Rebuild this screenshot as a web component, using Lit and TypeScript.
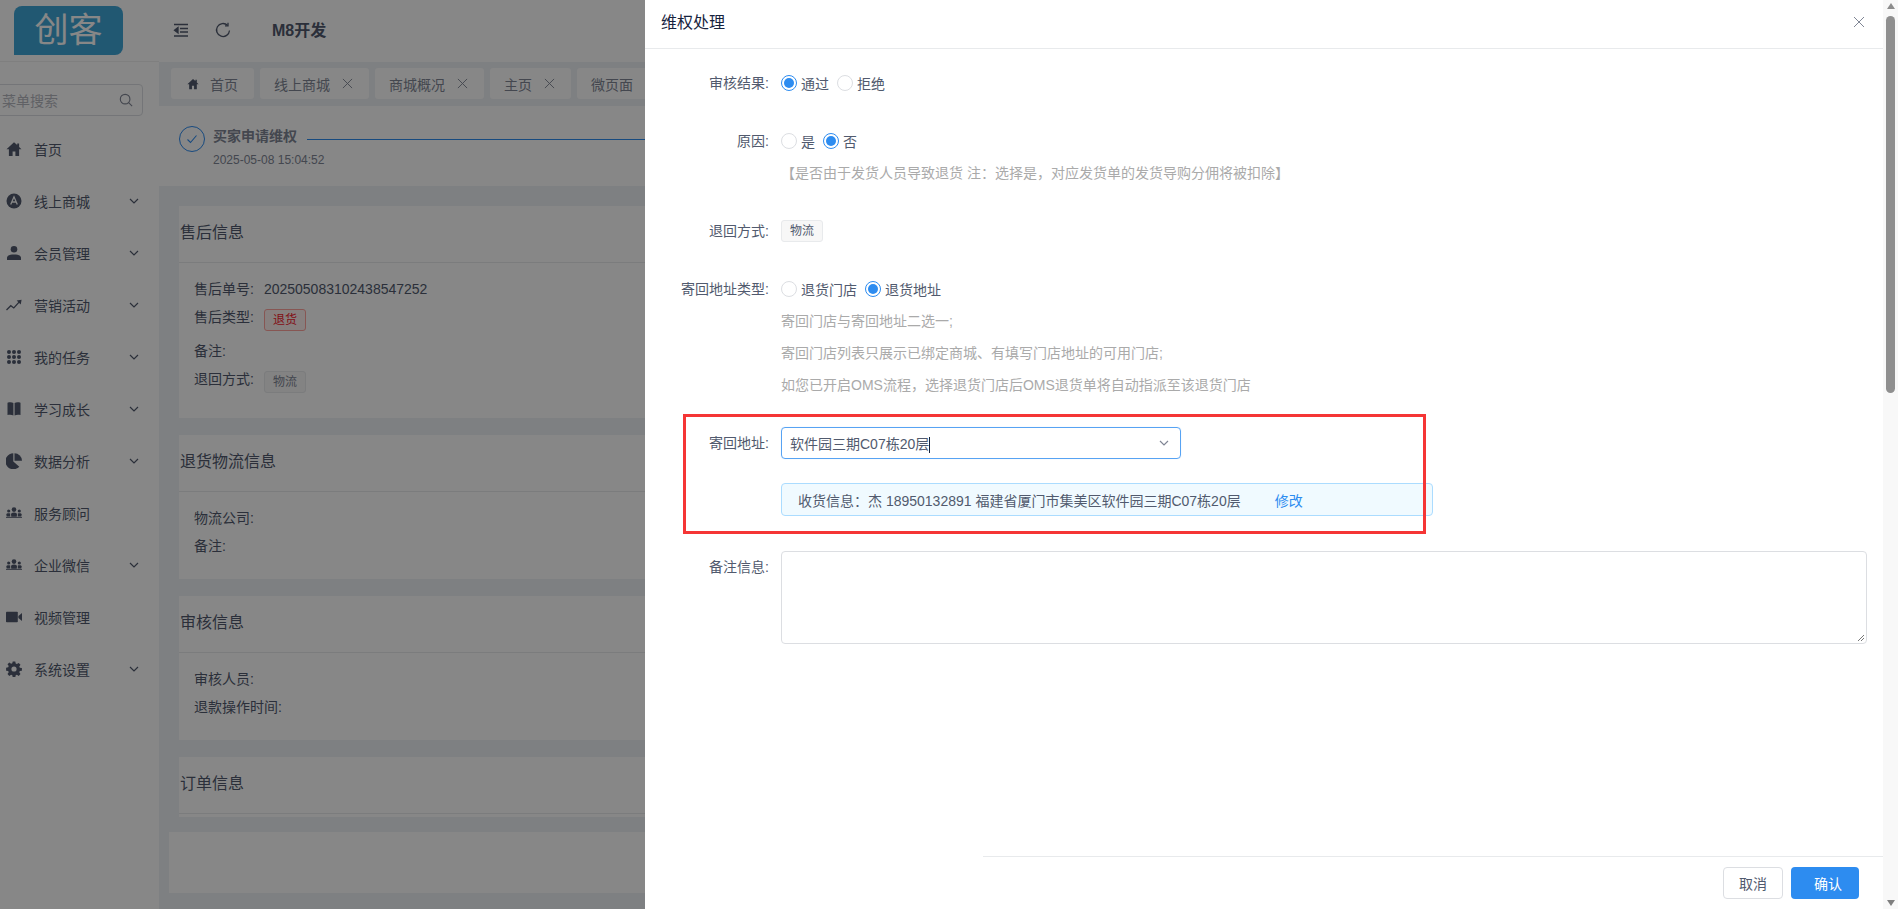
import { LitElement, html, css, svg } from "lit";
import { customElement } from "lit/decorators.js";

const chev = svg`<path d="M2 4l4 4 4-4" fill="none" stroke="currentColor" stroke-width="1.2"/>`;
const icons: Record<string, unknown> = {
  home: svg`<path d="M8 1.200L.5 8.200h2.400V15h3.700v-4.600h2.800V15h3.700V8.200h2.400l-2.400-2.300V2.400h-1.900v1.700z"/>`,
  store: svg`<circle cx="8" cy="8" r="7.500"/><path d="M4.700 11.500L8 3.800l3.300 7.700M6 9h4" fill="none" stroke="#fff" stroke-width="1.300"/>`,
  user: svg`<circle cx="8" cy="4.300" r="3.300"/><path d="M1 15v-2c0-2.300 2.800-3.400 7-3.400s7 1.100 7 3.400v2z"/>`,
  trend: svg`<path d="M.5 13l4.300-4.300 3 2.200 5.500-6" fill="none" stroke="currentColor" stroke-width="1.300"/><path d="M10.700 3.600l4.900-.8-.9 4.800z"/>`,
  grid: svg`<g>${[3, 8, 13].flatMap((y) => [3, 8, 13].map((x) => svg`<circle cx="${x}" cy="${y}" r="2"/>`))}</g>`,
  book: svg`<path d="M1.500 1.800c2.300-.7 4.500-.6 5.900.3v12.400c-1.600-.8-3.700-1-5.900-.4zM14.500 1.800c-2.300-.7-4.500-.6-5.900.3v12.400c1.600-.8 3.700-1 5.900-.4z"/>`,
  pie: svg`<path d="M7.300.300v8.300l6 5.100A8 8 0 117.300.300z"/><path d="M8.500.300a7.600 7.600 0 017.500 7.500H8.500z"/>`,
  team: svg`<circle cx="8" cy="4.600" r="2.300"/><path d="M5.300 11.800l-.3-2.400c0-1.300 1.200-2 3-2s3 .7 3 2l-.3 2.400z"/><circle cx="2.700" cy="6" r="1.600"/><path d="M.8 11.400L.3 9.700c0-.9.900-1.400 2.400-1.400.6 0 1.100.1 1.500.2v2.900z"/><circle cx="13.300" cy="6" r="1.600"/><path d="M15.200 11.400l.5-1.700c0-.9-.9-1.400-2.400-1.400-.6 0-1.100.1-1.500.2v2.900z"/><rect x="0" y="11.900" width="16" height=".9"/>`,
  video: svg`<rect x="0" y="2.800" width="11.800" height="10.400" rx=".8"/><path d="M12.400 7l3.600-3v8l-3.600-3z"/>`,
  gear: svg`<path fill-rule="evenodd" d="M6.700.500h2.600l.4 2.100 1.200.5 1.800-1.200 1.800 1.800-1.200 1.800.5 1.200 2.100.4v2.600l-2.100.4-.5 1.200 1.200 1.800-1.800 1.800-1.800-1.200-1.200.5-.4 2.100H6.700l-.4-2.100-1.200-.5-1.800 1.200-1.800-1.800 1.200-1.800-.5-1.200-2.100-.4V6.700l2.100-.4.5-1.200-1.200-1.800 1.800-1.800 1.800 1.200 1.200-.5zM8 5.400a2.600 2.600 0 100 5.200 2.600 2.600 0 000-5.200z"/>`,
};

const menu: [string, string, boolean][] = [
  ["home", "首页", false],
  ["store", "线上商城", true],
  ["user", "会员管理", true],
  ["trend", "营销活动", true],
  ["grid", "我的任务", true],
  ["book", "学习成长", true],
  ["pie", "数据分析", true],
  ["team", "服务顾问", false],
  ["team", "企业微信", true],
  ["video", "视频管理", false],
  ["gear", "系统设置", true],
];

const close = svg`<path d="M1 1l10 10M11 1L1 11" fill="none" stroke="currentColor" stroke-width="1"/>`;

@customElement("app-root")
export class AppRoot extends LitElement {
  static styles = css`
    :host { display: block; position: relative; width: 1898px; height: 909px; overflow: hidden;
      font-family: "Liberation Sans", "Noto Sans CJK SC", sans-serif; font-size: 14px; color: #515a6e; background: #fff; }
    * { box-sizing: border-box; }
    .page { display: flex; height: 909px; }
    .side { width: 159px; flex: none; background: #fff; }
    .brand { height: 62px; padding: 6px 0 0 14px; border-bottom: 1px solid #f0f0f0; }
    .logo { width: 109px; height: 49px; background: #3fa6d8; border-radius: 8px 8px 8px 0; color: #fff; font-size: 34px; line-height: 49px; text-align: center; font-weight: 400; }
    .search { margin: 22px 16px 0 -10px; height: 32px; border: 1px solid #dcdee2; border-radius: 4px; display: flex; align-items: center; justify-content: space-between; padding: 0 9px 0 11px; color: #b5b8bf; }
    .search svg { width: 14px; height: 14px; color: #808695; }
    .menu { margin-top: 7px; }
    .mi { height: 52px; display: flex; align-items: center; padding-left: 6px; color: #515a6e; }
    .mi .ic { width: 16px; height: 16px; fill: currentColor; flex: none; margin-right: 12px; }
    .mi .ch { width: 12px; height: 12px; margin-left: 38px; }
    .main { flex: 1; min-width: 0; background: #eef1f5; overflow: hidden; }
    .head { height: 62px; background: #fff; display: flex; align-items: center; padding: 0 0 3px 14px; }
    .head svg { width: 16px; height: 16px; fill: none; stroke: #515a6e; stroke-width: 1.300; }
    .head .refresh { margin-left: 26px; }
    .head b { margin: 0 0 2px 41px; font-size: 16px; color: #515a6e; font-weight: 700; }
    .tabs { height: 44px; padding: 6px 0 0 12px; display: flex; gap: 6px; overflow: hidden; }
    .tab { height: 31px; background: #fff; border-radius: 3px; display: flex; align-items: center; padding: 0 16px 0 14px; color: #808695; flex: none; gap: 12px; }
    .tab svg { width: 11px; height: 11px; color: #808695; }
    .tab .h { fill: #515a6e; width: 12px; height: 12px; margin: 0 -1px 0 2px; }
    .steps { height: 80px; background: #fff; display: flex; padding: 20px 0 0 20px; }
    .circle { width: 26px; height: 26px; border: 1px solid #2d8cf0; border-radius: 50%; display: flex; align-items: center; justify-content: center; flex: none; }
    .circle svg { width: 12px; height: 12px; fill: none; stroke: #2d8cf0; stroke-width: 1.100; }
    .stext { margin-left: 8px; flex: 1; min-width: 0; }
    .strow { display: flex; }
    .stitle { line-height: 20px; font-weight: 700; color: #808695; flex: none; }
    .sdate { margin-top: 5px; font-size: 12px; line-height: 18px; color: #808695; }
    .sline { height: 1px; background: #2d8cf0; flex: 1; margin: 13px 0 0 10px; }
    .cards { padding: 20px 0 0 20px; display: flex; flex-direction: column; gap: 17px; }
    .card { background: #fff; }
    .card h3 { margin: 0; height: 57px; border-bottom: 1px solid #e8eaec; padding-left: 1px; font-size: 16px; font-weight: 400; line-height: 53px; color: #515a6e; }
    .cbody { padding: 12px 15px 19px; }
    .cbody.first { padding-bottom: 25px; }
    .r { height: 28px; line-height: 28px; display: flex; align-items: flex-start; white-space: nowrap; }
    .r.sp { margin-top: 6px; }
    .num { margin-left: 10px; }
    .tag { height: 22px; width: 42px; margin: 6px 0 0 10px; line-height: 20px; text-align: center; font-size: 12px; border: 1px solid #e8eaec; background: #f7f7f7; border-radius: 3px; color: #808695; }
    .tag.red { background: #fff1f0; color: #f5222d; border-color: #ffa39e; }
    .tail { height: 3px; }
    .blank { background: #fff; height: 61px; margin: -2px 0 0 -10px; }
    .veil { position: absolute; inset: 0; background: rgba(0, 0, 0, 0.47); }
    .drawer { position: absolute; top: 0; right: 0; bottom: 0; width: 1253px; background: #fff; display: flex; }
    .panel { flex: 1; min-width: 0; display: flex; flex-direction: column; position: relative; }
    .dhead { height: 49px; border-bottom: 1px solid #e8eaec; padding: 0 18px 6px 16px; display: flex; align-items: center; justify-content: space-between; font-size: 16px; color: #17233d; }
    .dhead svg { width: 12px; height: 12px; color: #808695; margin-top: 1px; }
    .form { flex: 1; padding: 18px 16px 0 0; }
    .row { display: flex; margin-bottom: 26px; }
    .row.flush { margin-bottom: 0; }
    .row.note { margin-top: 35px; }
    .lab { width: 124px; flex: none; text-align: right; line-height: 32px; }
    .val { flex: 1; min-width: 0; margin-left: 12px; }
    .line { min-height: 32px; display: flex; align-items: center; }
    .radio { display: flex; align-items: center; margin-right: 8px; gap: 4px; }
    .dot { width: 16px; height: 16px; border: 1px solid #dcdee2; border-radius: 50%; background: #fff; flex: none; display: flex; align-items: center; justify-content: center; }
    .dot.on { border-color: #2d8cf0; }
    .dot.on::after { content: ""; width: 10px; height: 10px; border-radius: 50%; background: #2d8cf0; }
    .hint { line-height: 32px; color: #aaa; white-space: nowrap; }
    .ptag { display: inline-block; height: 22px; width: 42px; text-align: center; line-height: 21px; font-size: 12px; border: 1px solid #e8eaec; background: #f7f7f7; border-radius: 3px; }
    .select { width: 400px; height: 32px; border: 1px solid #57a3f3; border-radius: 4px; display: flex; align-items: center; padding-left: 8px; justify-content: space-between; color: #515a6e; box-shadow: 0 0 1px rgba(45,140,240,.3); }
    .select i { width: 1px; height: 16px; background: #17233d; display: inline-block; vertical-align: middle; }
    .select svg { width: 12px; height: 12px; margin-right: 10px; color: #808695; }
    .alert { margin-top: 24px; width: 652px; height: 33px; border: 1px solid #abdcff; background: #f0faff; border-radius: 4px; padding-left: 16px; display: flex; align-items: center; color: #515a6e; }
    .alert a { color: #2d8cf0; margin-left: 34px; }
    .area { width: 100%; height: 93px; border: 1px solid #dcdee2; border-radius: 4px; position: relative; }
    .area svg { position: absolute; right: 1px; bottom: 1px; width: 9px; height: 9px; stroke: #777; fill: none; }
    .mark { position: absolute; left: 38px; top: 414px; width: 743px; height: 120px; border: 3px solid #f53535; pointer-events: none; }
    .foot { height: 53px; margin-left: 338px; border-top: 1px solid #e8eaec; display: flex; justify-content: flex-end; align-items: flex-start; padding: 10px 24px 0 0; gap: 8px; }
    .btn { height: 32px; border-radius: 4px; display: flex; align-items: center; justify-content: center; }
    .btn.c { width: 60px; border: 1px solid #dcdee2; color: #515a6e; }
    .btn.o { width: 68px; background: #2d8cf0; color: #fff; padding-left: 6px; }
    .bar { width: 15px; flex: none; background: #f8f8f8; display: flex; flex-direction: column; align-items: center; }
    .up, .down { width: 0; height: 0; border-left: 4.500px solid transparent; border-right: 4.500px solid transparent; }
    .up { margin-top: 3px; border-bottom: 6px solid #8c8c8c; }
    .thumb { width: 9px; height: 377px; margin-top: 7px; background: #8f8f8f; border-radius: 5px; }
    .down { margin-top: auto; margin-bottom: 3px; border-top: 6px solid #7f7f7f; }
  `;

  private radio(label: string, on: boolean) {
    return html`<label class="radio"><span class="dot ${on ? "on" : ""}"></span>${label}</label>`;
  }

  render() {
    const x = html`<svg viewBox="0 0 12 12">${close}</svg>`;
    return html`
      <div class="page">
        <aside class="side">
          <div class="brand"><div class="logo">创客</div></div>
          <div class="search"><span>菜单搜索</span><svg viewBox="0 0 16 16" fill="none" stroke="currentColor" stroke-width="1.300"><circle cx="7" cy="7" r="5.500"/><path d="M11 11l4 4"/></svg></div>
          <nav class="menu">
            ${menu.map(([i, t, c]) => html`<div class="mi"><svg class="ic" viewBox="0 0 16 16">${icons[i]}</svg><span>${t}</span>${c ? html`<svg class="ch" viewBox="0 0 12 12">${chev}</svg>` : ""}</div>`)}
          </nav>
        </aside>
        <main class="main">
          <div class="head">
            <svg viewBox="0 0 16 16"><path d="M1 2.500h14M7 6.500h8M7 10h8M1 14h14"/><path d="M5 5.500L1.500 8.200 5 11z" fill="#515a6e"/></svg>
            <svg class="refresh" viewBox="0 0 16 16"><path d="M14.500 8.500A6.500 6.500 0 1 1 12.500 3.300"/><path d="M13 .8v3h-3"/></svg>
            <b>M8开发</b>
          </div>
          <div class="tabs">
            <div class="tab"><svg class="h" viewBox="0 0 16 16">${icons.home}</svg>首页</div>
            <div class="tab">线上商城${x}</div>
            <div class="tab">商城概况${x}</div>
            <div class="tab">主页${x}</div>
            <div class="tab">微页面${x}</div>
          </div>
          <div class="steps">
            <div class="circle"><svg viewBox="0 0 12 12"><path d="M1.500 6.500l3 3 6-7"/></svg></div>
            <div class="stext"><div class="strow"><div class="stitle">买家申请维权</div><div class="sline"></div></div><div class="sdate">2025-05-08 15:04:52</div></div>
          </div>
          <div class="cards">
            <section class="card"><h3>售后信息</h3><div class="cbody first">
              <div class="r"><span>售后单号:</span><span class="num">202505083102438547252</span></div>
              <div class="r"><span>售后类型:</span><span class="tag red">退货</span></div>
              <div class="r sp"><span>备注:</span></div>
              <div class="r"><span>退回方式:</span><span class="tag">物流</span></div>
            </div></section>
            <section class="card"><h3>退货物流信息</h3><div class="cbody">
              <div class="r"><span>物流公司:</span></div><div class="r"><span>备注:</span></div>
            </div></section>
            <section class="card"><h3>审核信息</h3><div class="cbody">
              <div class="r"><span>审核人员:</span></div><div class="r"><span>退款操作时间:</span></div>
            </div></section>
            <section class="card"><h3>订单信息</h3><div class="tail"></div></section>
            <div class="blank"></div>
          </div>
        </main>
      </div>
      <div class="veil"></div>
      <div class="drawer">
        <div class="panel">
          <div class="dhead"><span>维权处理</span><svg viewBox="0 0 12 12">${close}</svg></div>
          <div class="form">
            <div class="row"><div class="lab">审核结果:</div><div class="val"><div class="line">${this.radio("通过", true)}${this.radio("拒绝", false)}</div></div></div>
            <div class="row"><div class="lab">原因:</div><div class="val"><div class="line">${this.radio("是", false)}${this.radio("否", true)}</div><div class="hint">【是否由于发货人员导致退货 注：选择是，对应发货单的发货导购分佣将被扣除】</div></div></div>
            <div class="row"><div class="lab">退回方式:</div><div class="val"><div class="line"><span class="ptag">物流</span></div></div></div>
            <div class="row"><div class="lab">寄回地址类型:</div><div class="val"><div class="line">${this.radio("退货门店", false)}${this.radio("退货地址", true)}</div>
              <div class="hint">寄回门店与寄回地址二选一;</div>
              <div class="hint">寄回门店列表只展示已绑定商城、有填写门店地址的可用门店;</div>
              <div class="hint">如您已开启OMS流程，选择退货门店后OMS退货单将自动指派至该退货门店</div></div></div>
            <div class="row flush"><div class="lab">寄回地址:</div><div class="val">
              <div class="select"><span>软件园三期C07栋20层<i></i></span><svg viewBox="0 0 12 12">${chev}</svg></div>
              <div class="alert">收货信息：杰 18950132891 福建省厦门市集美区软件园三期C07栋20层<a>修改</a></div></div></div>
            <div class="row note"><div class="lab">备注信息:</div><div class="val"><div class="area"><svg viewBox="0 0 9 9"><path d="M8 2L2 8M8 5L5 8"/></svg></div></div></div>
          </div>
          <div class="foot"><div class="btn c">取消</div><div class="btn o">确认</div></div>
          <div class="mark"></div>
        </div>
        <div class="bar"><div class="up"></div><div class="thumb"></div><div class="down"></div></div>
      </div>
    `;
  }
}
